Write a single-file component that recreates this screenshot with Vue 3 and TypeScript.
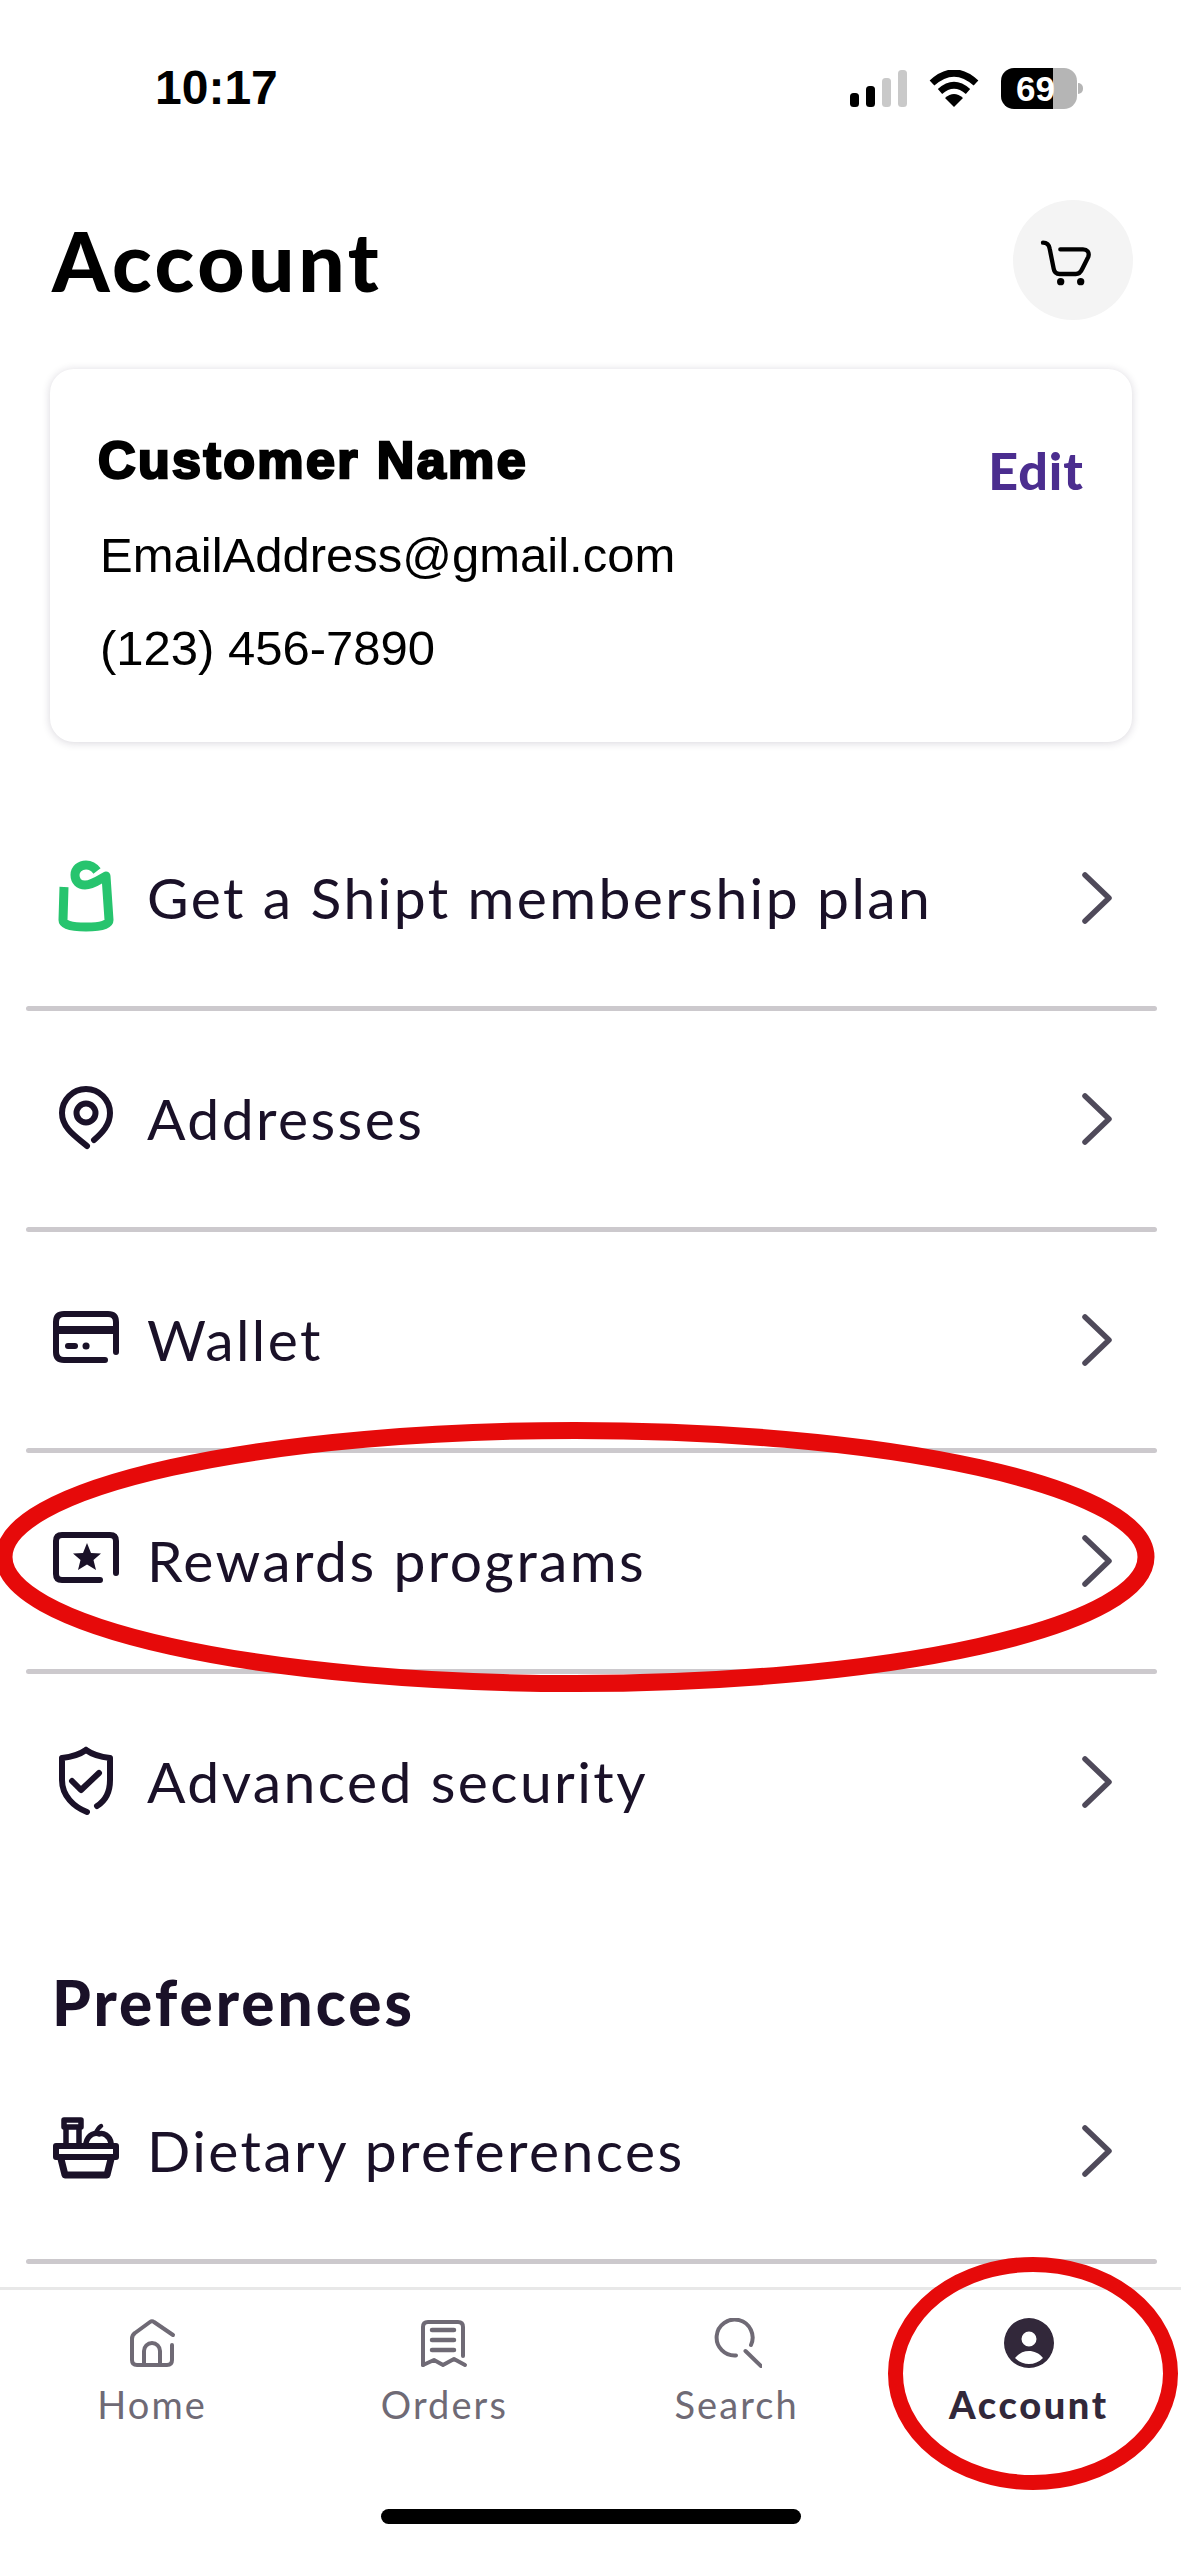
<template>
  <div class="page">
    <div class="status">
      <span class="time">10:17</span>
      <div class="status-icons">
        <div class="signal">
          <i class="bar b1"></i><i class="bar b2"></i><i class="bar b3 off"></i><i class="bar b4 off"></i>
        </div>
        <svg class="wifi" width="50" height="37" viewBox="0 0 50 37">
          <path d="M3 13 Q25 -7 47 13" fill="none" stroke="#000" stroke-width="7" />
          <path d="M11 21.5 Q25 9 39 21.5" fill="none" stroke="#000" stroke-width="6.5" />
          <path d="M25 37 L16 28 Q25 20 34 28 Z" fill="#000" />
        </svg>
        <div class="battery">
          <div class="battery-body"><span>69</span></div>
          <i class="nub"></i>
        </div>
      </div>
    </div>

    <header class="head">
      <h1>Account</h1>
      <button class="cart" type="button" aria-label="Cart">
        <svg width="100" height="100" viewBox="0 0 300 300">
          <path
            d="M60 98 C72 98 78 104 80 116 L92 176 C94 188 100 192 110 192 L158 192 C168 192 174 186 178 176 L196 140 C200 126 192 118 180 118 L112 118"
            fill="none"
            stroke="#000"
            stroke-width="13"
            stroke-linecap="round"
          />
          <circle cx="113" cy="215" r="11" fill="#000" />
          <circle cx="173" cy="215" r="11" fill="#000" />
        </svg>
      </button>
    </header>

    <section class="card">
      <div class="who">
        <div class="name">Customer Name</div>
        <div class="email">EmailAddress@gmail.com</div>
        <div class="phone">(123) 456-7890</div>
      </div>
      <a class="edit">Edit</a>
    </section>

    <nav class="list">
      <template v-for="(row, i) in mainRows" :key="row.label">
        <div class="row">
          <svg class="row-icon" width="72" height="72" viewBox="0 0 72 72">
            <path
              v-for="(s, j) in icons[row.icon]"
              :key="j"
              :d="s.d"
              :fill="s.fill ?? 'none'"
              :stroke="s.fill ? 'none' : (s.stroke ?? ink)"
              :stroke-width="s.w ?? 6"
              :stroke-linecap="s.cap ?? 'round'"
              stroke-linejoin="round"
            />
          </svg>
          <span class="row-label">{{ row.label }}</span>
          <svg class="chev" width="36" height="56" viewBox="0 0 36 56">
            <path d="M6 5 L30 28 L6 51" fill="none" stroke="#4f4a5a" stroke-width="5.5" stroke-linecap="round" stroke-linejoin="round" />
          </svg>
        </div>
        <hr v-if="i < mainRows.length - 1" class="rule" />
      </template>

      <h2 class="section">Preferences</h2>

      <div class="row">
        <svg class="row-icon" width="72" height="72" viewBox="0 0 72 72">
          <path
            v-for="(s, j) in icons.basket"
            :key="j"
            :d="s.d"
            :fill="s.fill ?? 'none'"
            :stroke="s.fill ? 'none' : ink"
            :stroke-width="s.w ?? 6"
            stroke-linecap="round"
            stroke-linejoin="round"
          />
        </svg>
        <span class="row-label">Dietary preferences</span>
        <svg class="chev" width="36" height="56" viewBox="0 0 36 56">
          <path d="M6 5 L30 28 L6 51" fill="none" stroke="#4f4a5a" stroke-width="5.5" stroke-linecap="round" stroke-linejoin="round" />
        </svg>
      </div>
      <hr class="rule" />
    </nav>

    <footer class="tabs">
      <div class="tab-row">
        <div v-for="tab in tabs" :key="tab.label" class="tab" :class="{ active: tab.active }">
          <svg width="50" height="50" viewBox="0 0 50 50">
            <path
              v-for="(s, j) in tab.shapes"
              :key="j"
              :d="s.d"
              :fill="s.fill ?? 'none'"
              :stroke="s.fill ? 'none' : '#6f6a75'"
              :stroke-width="s.w ?? 4"
              stroke-linecap="round"
              stroke-linejoin="round"
            />
          </svg>
          <span>{{ tab.label }}</span>
        </div>
      </div>
      <div class="home-bar"></div>
    </footer>

    <!-- red hand-drawn markers on top of the screenshot -->
    <svg class="marks" width="1181" height="2556" viewBox="0 0 1181 2556">
      <ellipse cx="575" cy="1557" rx="571" ry="126.5" fill="none" stroke="#e60a0a" stroke-width="17" />
      <ellipse cx="1033" cy="2373.5" rx="137.5" ry="109" fill="none" stroke="#e60a0a" stroke-width="15" />
    </svg>
  </div>
</template>

<script setup lang="ts">
interface Shape {
  d: string
  fill?: string
  stroke?: string
  w?: number
  cap?: 'round' | 'butt'
}

const ink = '#1a1128'

const icons: Record<string, Shape[]> = {
  bag: [
    {
      d: 'M14 25 L13 58 Q13 65 36 65 Q59 65 59 58 L56 14 C50 17 43 23 35 23 C29 23 25 19 25 13 C25 7 30 3 36 3 C41 3 44 5 47 9',
      stroke: '#27c46e',
      w: 9,
      cap: 'butt',
    },
  ],
  pin: [
    { d: 'M37 63 C28 55 12 46 12 30 A24 24 0 0 1 60 30 C60 42 52 50 44 57' },
    { d: 'M45.5 30 A9.5 9.5 0 1 1 26.5 30 A9.5 9.5 0 1 1 45.5 30' },
  ],
  wallet: [
    { d: 'M55 56 L14 56 Q6 56 6 48 L6 18 Q6 10 14 10 L58 10 Q66 10 66 18 L66 48' },
    { d: 'M6 26 L66 26', w: 8, cap: 'butt' },
    { d: 'M18 42 L25 42' },
    { d: 'M36 42 L36.1 42', w: 7 },
  ],
  star: [
    { d: 'M50 55 L12 55 Q6 55 6 49 L6 16 Q6 10 12 10 L60 10 Q66 10 66 16 L66 48' },
    {
      d: 'M37 18 L41 28 L51 28.5 L43.5 35 L46 45 L37 39.5 L28 45 L30.5 35 L23 28.5 L33 28 Z',
      fill: ink,
    },
  ],
  shield: [
    { d: 'M36 4 C29 9 21 11 12 12 L12 34 C12 50 24 61 37 66 M47 60 C55 55 60 46 60 34 L60 12 C51 11 43 9 36 4' },
    { d: 'M22 35 L31 44 L49 27' },
  ],
  basket: [
    { d: 'M6 31 L66 31 L66 42 L6 42 Z', w: 6 },
    { d: 'M11 44 L15 60 L57 60 L61 44', w: 7 },
    { d: 'M14 5 L31 5 L31 12 L14 12 Z', w: 5.5 },
    { d: 'M16 14 L16 28 M29 14 L29 28', w: 5.5 },
    { d: 'M36 28 C38 19 46 17 49 19 C53 17 60 21 61 28', w: 5.5 },
    { d: 'M46 18 C47 15 48 13 51 11', w: 4.5 },
  ],
}

const mainRows = [
  { label: 'Get a Shipt membership plan', icon: 'bag' },
  { label: 'Addresses', icon: 'pin' },
  { label: 'Wallet', icon: 'wallet' },
  { label: 'Rewards programs', icon: 'star' },
  { label: 'Advanced security', icon: 'shield' },
]

const tabs: { label: string; active?: boolean; shapes: Shape[] }[] = [
  {
    label: 'Home',
    shapes: [
      { d: 'M46 17 L27 4 Q25 2.5 23 4 L8 15 Q5 17 5 21 L5 42 Q5 47 10 47 L40 47 Q45 47 45 42 L45 27' },
      { d: 'M17 46 L17 33 A8 8 0 0 1 33 33 L33 46' },
    ],
  },
  {
    label: 'Orders',
    shapes: [
      { d: 'M4 47 L4 9 Q4 4 9 4 L39 4 Q44 4 44 9 L44 38' },
      { d: 'M4 47 L15 42 L24 47 L35 41 L46 47' },
      { d: 'M13 12 L35 12 M13 22 L35 22 M13 32 L35 32', w: 4.5 },
    ],
  },
  {
    label: 'Search',
    shapes: [
      { d: 'M24 37.5 A18 18 0 1 1 39 27' },
      { d: 'M33.5 33 L49 48' },
    ],
  },
  {
    label: 'Account',
    active: true,
    shapes: [
      {
        fill: '#32283a',
        d: 'M25 0 A25 25 0 1 1 25 50 A25 25 0 1 1 25 0 Z M25 13.5 A7.5 7.5 0 1 0 25 28.5 A7.5 7.5 0 1 0 25 13.5 Z M11 40 C15 44 20 46 25 46 C30 46 35 44 39 40 C35 35 30 33 25 33 C20 33 15 35 11 40 Z',
      },
    ],
  },
]
</script>

<style scoped>
.page {
  position: relative;
  width: 1181px;
  height: 2556px;
  overflow: hidden;
  display: flex;
  flex-direction: column;
  background: #fff;
  color: #000;
  font-family: 'Liberation Sans', Arial, sans-serif;
}
.status {
  display: flex;
  justify-content: space-between;
  align-items: center;
  height: 176px;
  padding: 0 98px 0 155px;
  box-sizing: border-box;
}
.time {
  font-size: 48px;
  font-weight: 700;
  line-height: 56px;
}
.status-icons {
  display: flex;
  align-items: center;
  gap: 22px;
}
.signal {
  display: flex;
  align-items: flex-end;
  gap: 6.5px;
  height: 37px;
}
.bar {
  display: block;
  width: 9.5px;
  border-radius: 3.5px;
  background: #000;
}
.bar.off {
  background: #c9c9c9;
}
.b1 { height: 14px; }
.b2 { height: 21px; }
.b3 { height: 29px; }
.b4 { height: 37px; }
.battery {
  display: flex;
  align-items: center;
  gap: 1px;
}
.battery-body {
  width: 76px;
  height: 41px;
  border-radius: 13px;
  background: linear-gradient(90deg, #000 0 52px, #b5b5b5 52px);
  color: #fff;
  font-size: 35px;
  font-weight: 700;
  line-height: 41px;
  padding-left: 15px;
  box-sizing: border-box;
}
.nub {
  display: block;
  width: 5px;
  height: 11px;
  border-radius: 0 6px 6px 0;
  background: #b5b5b5;
}
.head {
  display: flex;
  justify-content: space-between;
  align-items: center;
  height: 144px;
  margin-top: 12px;
  padding: 0 48px 0 52px;
}
.head h1 {
  margin: 0;
  font-family: Lato, sans-serif;
  font-size: 82px;
  font-weight: 900;
  line-height: 96px;
  letter-spacing: 3.6px;
}
.cart {
  display: flex;
  align-items: center;
  justify-content: center;
  width: 120px;
  height: 120px;
  padding: 0;
  border: 0;
  border-radius: 50%;
  background: #f4f4f4;
}
.card {
  display: flex;
  justify-content: space-between;
  align-items: flex-start;
  height: 373px;
  margin: 37px 49px 0 50px;
  padding: 63px 48px 0 48px;
  box-sizing: border-box;
  background: #fff;
  border-radius: 24px;
  box-shadow: 0 1px 8px rgba(40, 30, 60, 0.18);
}
.name {
  font-size: 52px;
  font-weight: 700;
  line-height: 56px;
  letter-spacing: 2.4px;
  -webkit-text-stroke: 2.6px #000;
}
.email,
.phone {
  font-size: 49px;
  line-height: 60px;
  margin-left: 2px;
}
.email {
  margin-top: 37px;
}
.phone {
  margin-top: 33px;
}
.edit {
  margin-top: 10px;
  font-family: Lato, sans-serif;
  font-size: 52px;
  font-weight: 900;
  line-height: 56px;
  letter-spacing: 1px;
  color: #4b2d8f;
}
.list {
  margin-top: 48px;
  color: #1a1128;
  font-family: Lato, sans-serif;
}
.row {
  display: flex;
  align-items: center;
  height: 216px;
  padding: 0 66px 0 50px;
}
.row-icon {
  flex: none;
  overflow: visible;
}
.row-label {
  flex: 1;
  margin-left: 25px;
  padding-bottom: 3px;
  font-size: 57px;
  line-height: 70px;
  letter-spacing: 2.4px;
}
.chev {
  flex: none;
}
.rule {
  height: 5px;
  margin: 0 24px 0 26px;
  border: 0;
  border-radius: 2.5px;
  background: #ccc9cd;
}
.section {
  display: flex;
  align-items: flex-end;
  height: 153px;
  margin: 0;
  padding: 0 0 6px 52px;
  box-sizing: border-box;
  font-size: 62px;
  font-weight: 900;
  line-height: 70px;
  letter-spacing: 3px;
}
.tabs {
  margin-top: auto;
  height: 269px;
  box-sizing: border-box;
  border-top: 3px solid #e8e8e8;
  display: flex;
  flex-direction: column;
  align-items: center;
}
.tab-row {
  width: 100%;
  display: grid;
  grid-template-columns: repeat(4, 1fr);
  padding: 28px 6px 0;
  box-sizing: border-box;
}
.tab {
  display: flex;
  flex-direction: column;
  align-items: center;
  gap: 13px;
  font-family: Lato, sans-serif;
  font-size: 38px;
  line-height: 46px;
  letter-spacing: 2.1px;
  color: #6f6a75;
}
.tab.active {
  font-weight: 900;
  letter-spacing: 2.6px;
  color: #32283a;
}
.home-bar {
  width: 420px;
  height: 15px;
  margin-top: 82px;
  border-radius: 8px;
  background: #000;
}
.marks {
  position: absolute;
  top: 0;
  left: 0;
  pointer-events: none;
}
</style>
